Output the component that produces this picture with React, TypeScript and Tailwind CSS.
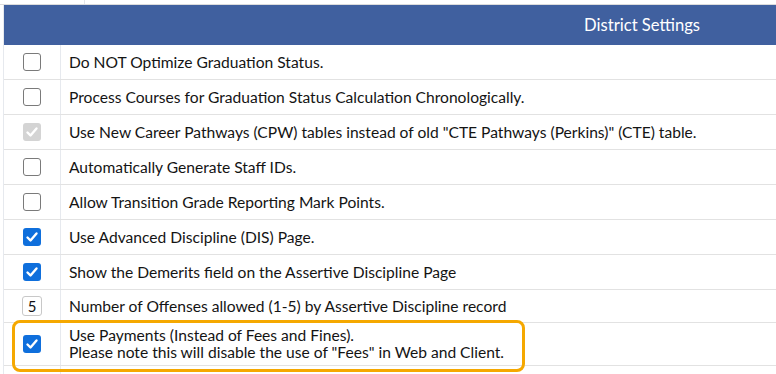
import React from 'react';

type Row = {
  kind: 'check' | 'disabled' | 'number';
  checked?: boolean;
  lines: string[];
  highlight?: boolean;
  h: string;
};

const rows: Row[] = [
  { kind: 'check', lines: ['Do NOT Optimize Graduation Status.'], h: 'h-[35px]' },
  { kind: 'check', lines: ['Process Courses for Graduation Status Calculation Chronologically.'], h: 'h-[35px]' },
  {
    kind: 'disabled',
    checked: true,
    lines: ['Use New Career Pathways (CPW) tables instead of old "CTE Pathways (Perkins)" (CTE) table.'],
    h: 'h-[35px]'
  },
  { kind: 'check', lines: ['Automatically Generate Staff IDs.'], h: 'h-[35px]' },
  { kind: 'check', lines: ['Allow Transition Grade Reporting Mark Points.'], h: 'h-[35px]' },
  { kind: 'check', checked: true, lines: ['Use Advanced Discipline (DIS) Page.'], h: 'h-[35px]' },
  { kind: 'check', checked: true, lines: ['Show the Demerits field on the Assertive Discipline Page'], h: 'h-[35px]' },
  { kind: 'number', lines: ['Number of Offenses allowed (1-5) by Assertive Discipline record'], h: 'h-[33px]' },
  {
    kind: 'check',
    checked: true,
    highlight: true,
    lines: [
      'Use Payments (Instead of Fees and Fines).',
      'Please note this will disable the use of "Fees" in Web and Client.'
    ],
    h: 'h-[43px]'
  }
];

const Check = ({ color }: { color: string }) => (
  <svg viewBox="0 0 18 18" className="w-[18px] h-[18px]">
    <rect x="0" y="0" width="18" height="18" rx="3" fill={color} />
    <polyline
      points="4.5,9.5 7.5,12.5 13.5,5.5"
      fill="none"
      stroke="white"
      strokeWidth="2.4"
      strokeLinecap="round"
      strokeLinejoin="round"
    />
  </svg>
);

const Control = ({ row }: { row: Row }) => {
  if (row.kind === 'number') {
    return (
      <div className="w-[20px] h-[20px] border border-[#c8c8c8] rounded-[3px] flex items-center justify-center text-[15px] text-[#111]">
        5
      </div>
    );
  }
  if (row.kind === 'disabled') return <Check color="#d4d4d4" />;
  if (row.checked) return <Check color="#0f6fdc" />;
  return <div className="w-[18px] h-[18px] border border-[#7a7a7a] rounded-[3px] bg-white" />;
};

export default function App() {
  return (
    <div
      className="w-[776px] h-[374px] bg-white overflow-hidden relative"
      style={{ fontFamily: 'Lato, "Noto Sans", sans-serif' }}
    >
      {/* tail of the table above */}
      <div className="h-[5px] border-b border-[#dcdcdc] flex">
        <div className="w-[85px] border-r border-[#e3e6ea]" />
      </div>

      <div className="ml-[3px] border-l border-[#e6e9ee]">
        <div className="h-[40px] bg-[#40609f] flex items-center justify-end pr-[76px]">
          <span className="text-white text-[16.6px]">District Settings</span>
        </div>

        {rows.map((row, i) => (
          <div key={i} className={`flex border-b border-[#e2e2e2] ${row.h}`}>
            <div className="w-[57px] shrink-0 border-r border-[#e6e9ee] flex items-center justify-center">
              <Control row={row} />
            </div>
            <div className="flex flex-col justify-center pl-[8px] text-[15.6px] leading-[17px] text-[#141414]">
              {row.lines.map((l) => (
                <div key={l}>{l}</div>
              ))}
            </div>
          </div>
        ))}
        <div className="h-[10px] flex">
          <div className="w-[57px] border-r border-[#e6e9ee]" />
        </div>
      </div>

      <div className="absolute left-[12px] top-[320px] w-[513px] h-[52px] border-[3px] border-[#f5a800] rounded-[8px] pointer-events-none" />
    </div>
  );
}
